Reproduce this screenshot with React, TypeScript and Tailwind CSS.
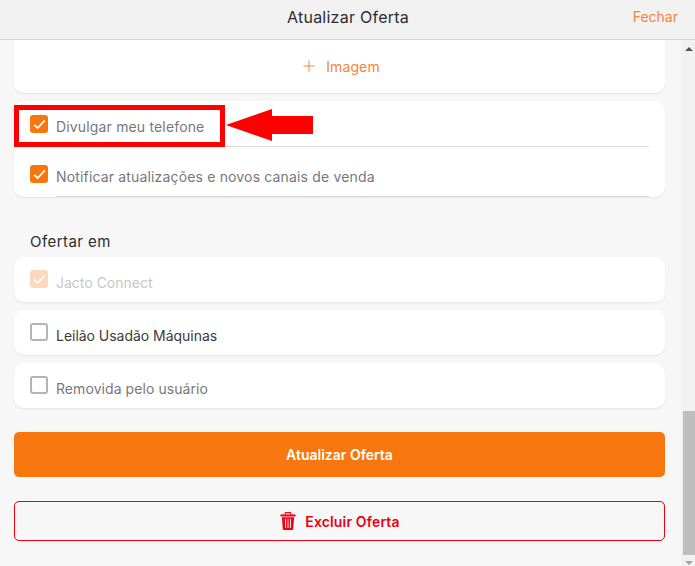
import { Plus } from "lucide-react";

const font = "font-['Inter','Noto_Sans',sans-serif]";

function CheckBox({ checked, faded }: { checked?: boolean; faded?: boolean }) {
  if (!checked) {
    return <div className="w-[18px] h-[18px] shrink-0 rounded-[3px] border-2 border-[#b4b4b4] bg-white" />;
  }
  return (
    <div className={`w-[18px] h-[18px] shrink-0 rounded-[3px] flex items-center justify-center ${faded ? "bg-[#fdd8bd]" : "bg-[#f7760d]"}`}>
      <svg width="13" height="11" viewBox="0 0 13 11" fill="none">
        <path d="M1.2 5.8 L4.7 9 L11.8 1.4" stroke="white" strokeWidth="1.7" />
      </svg>
    </div>
  );
}

function TrashIcon() {
  return (
    <svg width="16" height="20" viewBox="0 0 17 20" fill="none">
      <path d="M5.5 3 V1.8 Q5.5 1 6.3 1 H10.7 Q11.5 1 11.5 1.8 V3" stroke="#ee0010" strokeWidth="1.3" />
      <path d="M0.5 3 H16.5 V5.2 H0.5 Z" fill="#ee0010" />
      <path
        fillRule="evenodd"
        clipRule="evenodd"
        d="M2 6 H15 L14 18.4 Q13.9 19.6 12.7 19.6 H4.3 Q3.1 19.6 3 18.4 Z M5.2 7.6 L5.6 17.4 H6.6 L6.2 7.6 Z M8 7.6 V17.4 H9 V7.6 Z M10.8 7.6 L10.4 17.4 H11.4 L11.8 7.6 Z"
        fill="#ee0010"
      />
    </svg>
  );
}

function OfferRow({ label, textStyle, checked, faded }: { label: string; textStyle: string; checked?: boolean; faded?: boolean }) {
  return (
    <div className="h-[45px] bg-white rounded-[10px] shadow-[0_1px_2px_rgba(0,0,0,0.08)] flex pl-4 pt-[13px] gap-2">
      <CheckBox checked={checked} faded={faded} />
      <span className={`text-[14px] leading-[18px] mt-[4px] ${textStyle}`}>{label}</span>
    </div>
  );
}

export default function App() {
  return (
    <div className={`w-[695px] h-[566px] overflow-hidden flex flex-col bg-[#f7f7f7] ${font}`}>
      {/* Header */}
      <div className="h-10 shrink-0 bg-[#f1f1f1] border-b border-[#d4d4d4] flex items-center relative">
        <div className="flex-1 text-center text-[16px] text-[#2b2d33] tracking-[0.25px] pb-[5px] pl-[1px]">Atualizar Oferta</div>
        <div className="absolute right-[17px] top-[8px] text-[14px] leading-[18px] text-[#f98435]">Fechar</div>
      </div>

      <div className="flex-1 flex min-h-0">
        {/* Scrolled content */}
        <div className="w-[679px] px-[14px] relative">
          <div className="h-[53px] bg-white rounded-b-[10px] shadow-[0_1px_2px_rgba(0,0,0,0.08)] flex items-center justify-center gap-[8px] pb-[1px] pl-[1px] text-[#f98435]">
            <Plus size={18} strokeWidth={1.3} />
            <span className="text-[14px] tracking-[0.1px]">Imagem</span>
          </div>

          <div className="mt-2 h-24 bg-white rounded-[10px] shadow-[0_1px_2px_rgba(0,0,0,0.08)] flex flex-col">
            <div className="h-[46px] flex pl-4 pt-[14px] gap-2">
              <CheckBox checked />
              <div className="flex-1 mr-4 border-b border-[#d9d9d9] text-[14px] leading-[18px] pt-[3px] text-[#77777b] tracking-[0.16px]">Divulgar meu telefone</div>
            </div>
            <div className="h-[50px] flex pl-4 pt-[18px] gap-2">
              <CheckBox checked />
              <div className="flex-1 mr-4 border-b border-[#d9d9d9] text-[14px] leading-[18px] pt-[3px] text-[#77777b] tracking-[0.16px]">Notificar atualizações e novos canais de venda</div>
            </div>
          </div>

          <div className="mt-[35px] pl-4 text-[15px] leading-5 text-[#2b2d33] tracking-[0.45px]">Ofertar em</div>

          <div className="mt-[5px] flex flex-col gap-2">
            <OfferRow label="Jacto Connect" textStyle="text-[#c6c6c6]" checked faded />
            <OfferRow label="Leilão Usadão Máquinas" textStyle="text-[#3a3a3e] tracking-[-0.03px]" />
            <OfferRow label="Removida pelo usuário" textStyle="text-[#77777b] tracking-[0.07px]" />
          </div>

          <button className="mt-6 w-full h-[45px] rounded-[5px] bg-[#f7760d] text-white text-[14px] font-semibold">Atualizar Oferta</button>

          <button className="mt-6 w-full h-10 rounded-[5px] border border-[#ee0010] text-[#ee0010] text-[14px] font-semibold tracking-[0.15px] flex items-center justify-center gap-[9px] pl-[1px]">
            <TrashIcon />
            Excluir Oferta
          </button>

          {/* Annotation over the screenshot */}
          <div className="absolute left-[14px] top-[65px] w-[211px] h-[42px] border-[5px] border-[#ff0000]" />
          <svg className="absolute left-[226px] top-[68px]" width="88" height="34" viewBox="0 0 88 34">
            <polygon points="0,17 46,1 46,8 87,8 87,26 46,26 46,33" fill="#ff0000" />
          </svg>
        </div>

        {/* Scrollbar */}
        <div className="w-[14px] ml-auto pl-[2px] bg-[#f1f1f1] flex flex-col items-center justify-between">
          <div className="mt-[7px] w-0 h-0 border-x-[4px] border-x-transparent border-b-[4px] border-b-[#505050]" />
          <div className="flex-1 flex flex-col justify-end w-full">
            <div className="h-[144px] w-full bg-[#bebebe]" />
          </div>
          <div className="mt-[6px] mb-[1px] w-0 h-0 border-x-[4px] border-x-transparent border-t-[4px] border-t-[#a3a3a3]" />
        </div>
      </div>
    </div>
  );
}
